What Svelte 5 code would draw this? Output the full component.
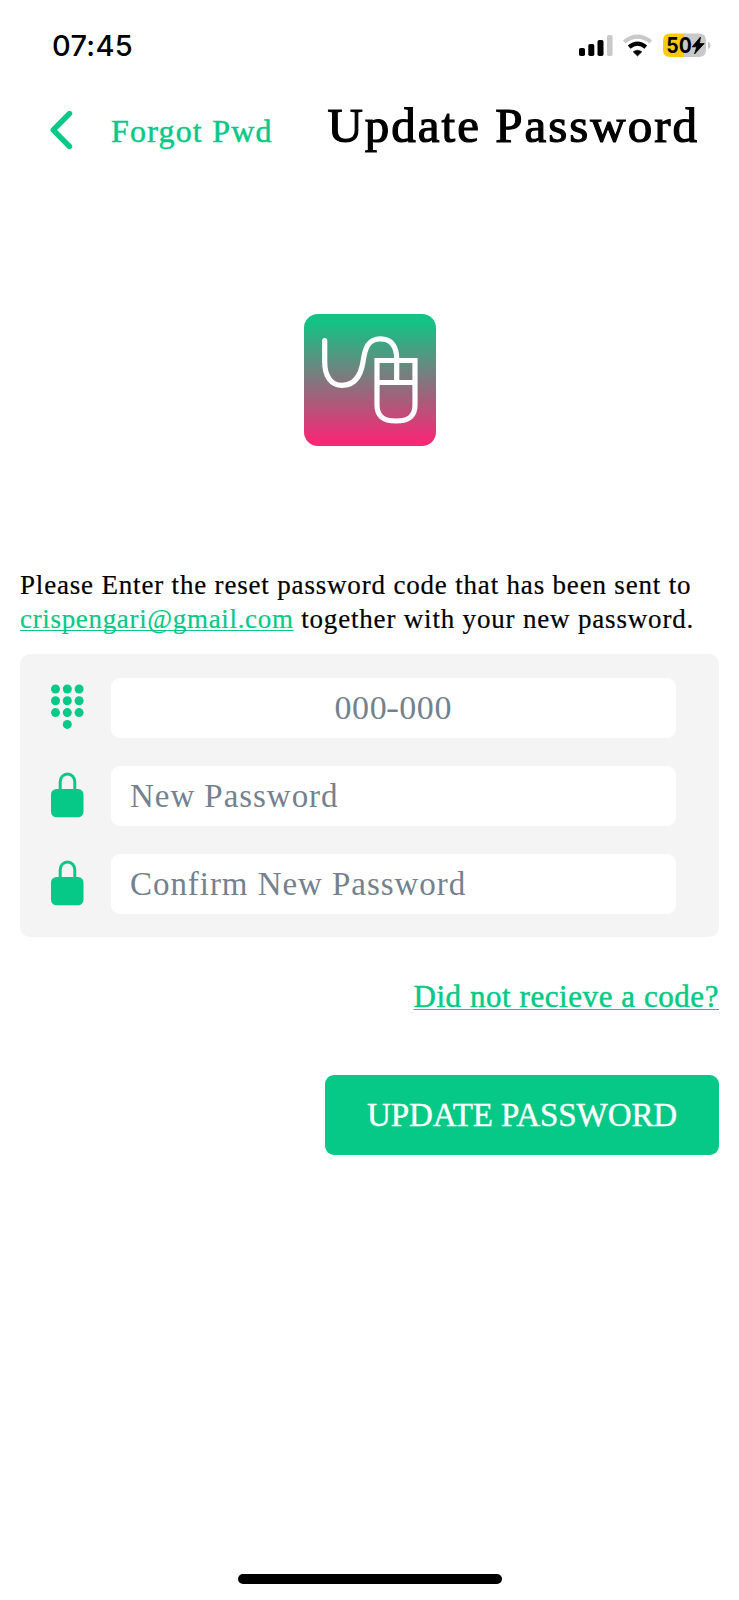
<script>
  const dots = [0, 1, 2, 3, 4, 5, 6, 7, 8].map((i) => ({ x: 4.5 + (i % 3) * 11.8, y: 5 + Math.floor(i / 3) * 11.8 }));
  dots.push({ x: 16.3, y: 40.4 });
  const passwordFields = ['New Password', 'Confirm New Password'];
</script>

<div class="screen">
  <div class="status">
    <span class="time">07:45</span>
    <svg class="indicators" width="134" height="28" viewBox="0 0 134 28">
      <rect x="1" y="17" width="6" height="8" rx="1.8" />
      <rect x="10.3" y="13" width="6" height="12" rx="1.8" />
      <rect x="19.5" y="9" width="6" height="16" rx="1.8" />
      <rect x="29" y="4" width="5.6" height="21" rx="1.8" fill="#c9c9c9" />
      <g fill="none" stroke-width="4.2">
        <path d="M46.2 10.8Q59.5 .6 72.8 10.8" stroke="#c9c9c9" />
        <path d="M51.2 16.2Q59.5 9 67.8 16.2" stroke="#000" />
      </g>
      <path d="M55.2 20.8Q59.5 17.6 63.8 20.8L59.5 25Z" stroke="#000" stroke-width=".6" stroke-linejoin="round" />
      <path d="M92 2.5H106V26H92Q85 26 85 19V9.500Q85 2.500 92 2.500Z" fill="#fbcb0e" />
      <path d="M106 2.500H121Q128 2.500 128 9.500V19Q128 26 121 26H106Z" fill="#c9c9c9" />
      <path d="M130 10.500Q132.600 11.500 132.600 14.200T130 18Z" fill="#c9c9c9" />
      <text x="88.300" y="21.800" font-family="Inter, sans-serif" font-weight="700" font-size="21.500" textLength="25.500" lengthAdjust="spacingAndGlyphs">50</text>
      <path d="M122.500 6L114.200 15.800H118.800L116.500 23L126.200 12.600H121.400Z" stroke="#000" stroke-width=".8" stroke-linejoin="round" />
    </svg>
  </div>

  <header>
    <svg class="chevron" width="24" height="40" viewBox="0 0 24 40" fill="none" stroke="#06c987" stroke-width="5.400" stroke-linecap="round" stroke-linejoin="round">
      <path d="M19.500 3.500L3.200 20L19.500 36.500" />
    </svg>
    <span class="back">Forgot Pwd</span>
    <h1>Update Password</h1>
  </header>

  <div class="brand">
    <svg width="132" height="132" viewBox="0 0 132 132">
      <defs>
        <linearGradient id="fade" x1="0" y1="0" x2="0" y2="1">
          <stop offset=".06" stop-color="#12c385" />
          <stop offset=".95" stop-color="#f32a76" />
        </linearGradient>
      </defs>
      <rect width="132" height="132" rx="14" fill="url(#fade)" />
      <g fill="none" stroke="#fff" stroke-width="5.200">
        <path d="M20.700 26.500V48C20.700 62 27 71.300 38 71.300C50 71.300 56.500 63 59 48C61 34 64 24.900 76.500 24.900C88 24.900 92.700 33 92.700 45V68" stroke-linecap="round" />
        <path d="M73 46.500H111V91C111 102 105 107 92 107S73 102 73 91ZM73 68.500H111" />
      </g>
    </svg>
  </div>

  <p class="message">
    <span class="line">Please Enter the reset password code that has been sent to</span>
    <span class="line"><span class="email">crispengari@gmail.com</span> together with your new password.</span>
  </p>

  <form>
    <label>
      <svg width="33" height="46" viewBox="0 0 33 46" fill="#06c987">
        {#each dots as dot}<circle cx={dot.x} cy={dot.y} r="4.500" />{/each}
      </svg>
      <span class="field code">000<span class="dash">-</span>000</span>
    </label>
    {#each passwordFields as name}
      <label>
        <svg width="33" height="46" viewBox="0 0 33 46">
          <path d="M9.200 19V9.800A7.300 7.800 0 0 1 23.800 9.800V19" fill="none" stroke="#06c987" stroke-width="3" />
          <rect x="0" y="17" width="32.500" height="28.300" rx="5.500" fill="#06c987" />
        </svg>
        <span class="field">{name}</span>
      </label>
    {/each}
  </form>

  <div class="resend"><span>Did not recieve a code?</span></div>
  <button type="button">UPDATE PASSWORD</button>
  <div class="home"></div>
</div>

<style>
  :global(body) { margin: 0; background: #fff; }
  .screen {
    box-sizing: border-box;
    width: 739px;
    height: 1600px;
    padding: 0 20px 16px;
    display: flex;
    flex-direction: column;
    background: #fff;
    color: #000;
    font-family: "Liberation Serif", serif;
    white-space: nowrap;
  }
  .status {
    height: 91px;
    padding: 0 7px 0 32px;
    display: flex;
    justify-content: space-between;
    align-items: center;
  }
  .time { font: 550 29px/36px Inter, sans-serif; letter-spacing: .3px; }
  .indicators { margin-top: -1px; }
  header {
    height: 78px;
    padding: 0 20px 0 30px;
    display: flex;
    align-items: center;
  }
  .chevron { flex: none; }
  .back {
    margin-left: 37px;
    padding-top: 1px;
    font-size: 32px;
    line-height: 36px;
    letter-spacing: 1.2px;
    color: #06c987;
    -webkit-text-stroke: .5px #06c987;
  }
  h1 {
    margin: -8px 0 0 auto;
    font-size: 49px;
    font-weight: 400;
    line-height: 56px;
    letter-spacing: 2px;
    -webkit-text-stroke: 1.2px #000;
  }
  .brand { margin-top: 145px; height: 132px; display: flex; justify-content: center; padding-left: 1px; }
  .message { margin: 122px 0 0; font-size: 27px; line-height: 34px; letter-spacing: .82px; -webkit-text-stroke: .2px; }
  .line { display: block; }
  .email {
    color: #06c987;
    letter-spacing: .67px;
    text-decoration: underline;
    text-decoration-thickness: 1px;
    text-underline-offset: 2px;
    text-decoration-skip-ink: none;
  }
  form {
    box-sizing: border-box;
    margin-top: 18px;
    height: 283px;
    padding: 23.500px 43px 24px 31px;
    border-radius: 10px;
    background: #f4f4f4;
    display: flex;
    flex-direction: column;
    gap: 28px;
  }
  label { display: flex; align-items: center; gap: 26.500px; height: 60px; }
  label svg { flex: none; margin-bottom: 2px; }
  .field {
    box-sizing: border-box;
    flex: 1;
    height: 60px;
    padding: 0 19.500px;
    border-radius: 9px;
    background: #fff;
    color: #74828f;
    font-size: 33px;
    line-height: 61px;
    letter-spacing: .95px;
  }
  .code { text-align: center; font-size: 34px; line-height: 59px; letter-spacing: .6px; }
  .dash { display: inline-block; transform: scaleX(1.15); }
  .resend { margin-top: 41px; height: 38px; display: flex; justify-content: flex-end; }
  .resend span {
    font-size: 31px;
    line-height: 38px;
    letter-spacing: .56px;
    color: #06c987;
    -webkit-text-stroke: .5px #06c987;
    text-decoration: underline;
    text-decoration-thickness: 1px;
    text-underline-offset: 2px;
  }
  button {
    align-self: flex-end;
    margin: 58.500px 0 0;
    width: 394px;
    height: 80px;
    padding: 0;
    border: 0;
    border-radius: 9px;
    background: #06c987;
    color: #fff;
    font: 33px/80px "Liberation Serif", serif;
    letter-spacing: -.08px;
    -webkit-text-stroke: .4px #fff;
  }
  .home { width: 264px; height: 10px; margin: auto auto 0; border-radius: 5px; background: #000; }
</style>
